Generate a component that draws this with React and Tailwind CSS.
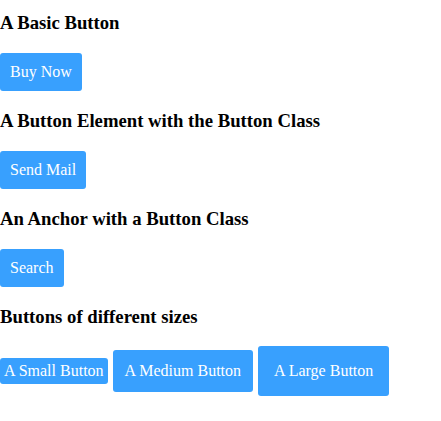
export default function App() {
  return (
    <div
      className="bg-white text-black pt-3 min-h-[421px]"
      style={{ fontFamily: '"Liberation Serif", "Times New Roman", serif' }}
    >
      {/* Basic button */}
      <h3 className="text-[18.72px] leading-[22px] font-bold mb-[19px]">A Basic Button</h3>
      <button className="inline-block bg-[#38a0fe] text-white rounded-[3px] text-[16px] leading-[18px] p-[10px] mb-[19px]">
        Buy Now
      </button>

      {/* Button element */}
      <h3 className="text-[18.72px] leading-[22px] font-bold mb-[19px]">
        A Button Element with the Button Class
      </h3>
      <button className="inline-block bg-[#38a0fe] text-white rounded-[3px] text-[16px] leading-[18px] p-[10px] mb-[19px]">
        Send Mail
      </button>

      {/* Anchor */}
      <h3 className="text-[18.72px] leading-[22px] font-bold mb-[19px]">
        An Anchor with a Button Class
      </h3>
      <div className="mb-[19px]">
        <a
          href="#"
          className="inline-block bg-[#38a0fe] text-white rounded-[3px] text-[16px] leading-[18px] p-[10px]"
        >
          Search
        </a>
      </div>

      {/* Sizes */}
      <h3 className="text-[18.72px] leading-[22px] font-bold mb-[18px]">Buttons of different sizes</h3>
      <div className="flex items-center gap-[5px]">
        <button className="bg-[#38a0fe] text-white rounded-[3px] text-[16px] leading-[18px] p-[4px]">
          A Small Button
        </button>
        <button className="bg-[#38a0fe] text-white rounded-[3px] text-[16px] leading-[18px] p-[12px]">
          A Medium Button
        </button>
        <button className="bg-[#38a0fe] text-white rounded-[3px] text-[16px] leading-[18px] p-[16px]">
          A Large Button
        </button>
      </div>
    </div>
  );
}
